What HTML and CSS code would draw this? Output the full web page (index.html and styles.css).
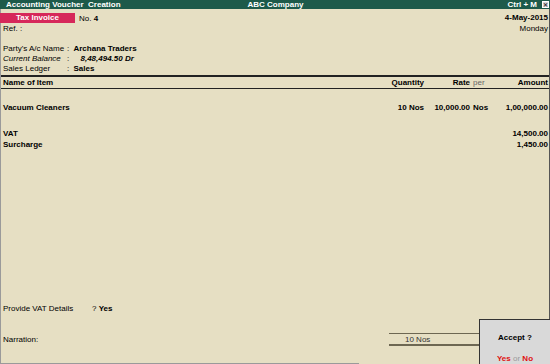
FILE: index.html
```html
<!DOCTYPE html>
<html lang="en">
<head>
    <meta charset="UTF-8">
    <title>Accounting Voucher Creation</title>
    <link rel="stylesheet" href="styles.css">
</head>
<body>
    <div class="titlebar">
        <span class="title-left">Accounting Voucher&nbsp; Creation</span>
        <span class="title-center">ABC Company</span>
        <span class="title-right">Ctrl + M <span class="close-box">&#x2715;</span></span>
    </div>

    <div class="sheet">
        <div class="voucher-head">
            <div>
                <div class="vtype-row">
                    <span class="vtype">Tax Invoice</span>
                    <span class="vno">No. <b>4</b></span>
                </div>
                <div class="line">Ref. :</div>
            </div>
            <div class="date-box">
                <div class="date">4-May-2015</div>
                <div class="line">Monday</div>
            </div>
        </div>

        <div class="party">
            <div class="line"><span class="lbl">Party's A/c Name</span>: <b class="val">Archana Traders</b></div>
            <div class="line"><i class="lbl">Current Balance</i>: <b class="val bal"><i>8,48,494.50 Dr</i></b></div>
            <div class="line"><span class="lbl">Sales Ledger</span>: <b class="val">Sales</b></div>
        </div>

        <div class="items-head">
            <span class="c-name">Name of Item</span>
            <span class="c-qty">Quantity</span>
            <span class="c-rate">Rate</span>
            <span class="c-per muted">per</span>
            <span class="c-amt">Amount</span>
        </div>

        <div class="items">
            <div class="item-row first">
                <span class="c-name">Vacuum Cleaners</span>
                <span class="c-qty">10 Nos</span>
                <span class="c-rate">10,000.00</span>
                <span class="c-per">Nos</span>
                <span class="c-amt">1,00,000.00</span>
            </div>
            <div class="item-row gap">
                <span class="c-name">VAT</span>
                <span class="c-amt">14,500.00</span>
            </div>
            <div class="item-row">
                <span class="c-name">Surcharge</span>
                <span class="c-amt">1,450.00</span>
            </div>
        </div>

        <div class="footer">
            <div class="line vat-row"><span class="vat-lbl">Provide VAT Details</span>? <b>Yes</b></div>
            <div class="narration-row">
                <span class="line">Narration:</span>
                <div class="total-qty">10 Nos</div>
            </div>
            <div class="bottom-rule"></div>
        </div>
    </div>

    <div class="accept">
        <div class="accept-q">Accept ?</div>
        <div class="accept-a"><span class="red">Yes</span> <span class="or">or</span> <span class="red">No</span></div>
    </div>
</body>
</html>
```

FILE: styles.css
```css
html, body {
    margin: 0;
    height: 100%;
}
body {
    font-family: "Liberation Sans", Arial, sans-serif;
    font-size: 8px;
    color: #000;
    background-color: #e6dfc3;
    display: flex;
    flex-direction: column;
    overflow: hidden;
    position: relative;
}
.titlebar {
    height: 9px;
    line-height: 9px;
    background-color: #1d5a4a;
    color: #fff;
    font-weight: bold;
    display: grid;
    grid-template-columns: 1fr auto 1fr;
    padding: 0 1px 0 6px;
}
.title-center {
    position: relative;
    left: -2px;
}
.title-right {
    justify-self: end;
    display: flex;
    align-items: center;
    gap: 5px;
}
.close-box {
    width: 7px;
    height: 7px;
    line-height: 7px;
    font-size: 6px;
    text-align: center;
    background-color: #d8d8d8;
    color: #333;
    border: 1px solid #fff;
    box-sizing: border-box;
}
.sheet {
    flex: 1;
    display: flex;
    flex-direction: column;
    border-left: 1px solid #9a9a9a;
    border-right: 1px solid #555;
}
.line {
    line-height: 10px;
}
.voucher-head {
    display: flex;
    justify-content: space-between;
    padding-top: 4px;
}
.vtype-row {
    display: flex;
    align-items: center;
    height: 10px;
}
.vtype {
    width: 75px;
    height: 10px;
    line-height: 10px;
    background-color: #d6285a;
    color: #fff;
    font-weight: bold;
    text-align: center;
    margin-left: -1px;
}
.vno {
    margin-left: 4px;
}
.voucher-head .line {
    padding-left: 2px;
    margin-top: 1px;
}
.date-box {
    text-align: right;
    padding-right: 1px;
}
.date {
    font-weight: bold;
    line-height: 10px;
}
.party {
    margin-top: 10px;
    padding-left: 2px;
}
.lbl {
    display: inline-block;
    width: 64px;
}
.val {
    margin-left: 2px;
}
.bal {
    margin-left: 9px;
}
.items-head {
    display: flex;
    border-top: 2px solid #222;
    border-bottom: 1px solid #222;
    margin-top: 1px;
    line-height: 11px;
    font-weight: bold;
}
.c-name {
    flex: 1;
    padding-left: 2px;
}
.c-qty {
    width: 60px;
    padding-right: 2px;
    text-align: right;
}
.c-rate {
    width: 44px;
    padding-right: 3px;
    text-align: right;
}
.c-per {
    width: 32px;
}
.c-amt {
    width: 43px;
    padding-right: 1px;
    text-align: right;
}
.muted {
    color: #666;
    font-weight: normal;
}
.item-row {
    display: flex;
    font-weight: bold;
    line-height: 11px;
}
.item-row.first {
    margin-top: 13px;
}
.item-row.gap {
    margin-top: 15px;
}
.footer {
    margin-top: auto;
}
.vat-row {
    padding-left: 2px;
}
.vat-lbl {
    display: inline-block;
    width: 89px;
}
.narration-row {
    display: flex;
    justify-content: space-between;
    align-items: flex-end;
    margin-top: 19px;
    padding-left: 2px;
}
.narration-row .line {
    margin-bottom: 1px;
}
.total-qty {
    width: 90px;
    box-sizing: border-box;
    margin-right: 70px;
    border-top: 1px solid #6d6752;
    border-bottom: 2px solid #6d6752;
    padding: 1px 0 0 16px;
    line-height: 9px;
    color: #333;
}
.bottom-rule {
    width: 358px;
    border-bottom: 1px solid #9a9a9a;
    margin-top: 17px;
}
.accept {
    position: absolute;
    right: 0;
    bottom: 0;
    width: 71px;
    height: 45px;
    box-sizing: border-box;
    background-color: #d9d9d9;
    border: 1px solid #333;
    border-right-width: 0;
    border-bottom-width: 0;
    text-align: center;
    font-weight: bold;
}
.accept-q {
    margin-top: 13px;
    line-height: 10px;
}
.accept-a {
    margin-top: 11px;
    line-height: 10px;
}
.red {
    color: #e01010;
}
.or {
    color: #999;
    font-weight: normal;
}
```
